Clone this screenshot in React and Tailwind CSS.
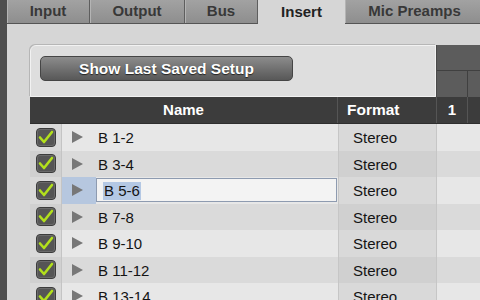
import React from "react";

const rows = ["B 1-2", "B 3-4", "B 5-6", "B 7-8", "B 9-10", "B 11-12", "B 13-14"];

function Check() {
  return (
    <svg width="20" height="19" viewBox="0 0 20 19">
      <rect x="0.5" y="0.5" width="19" height="18" rx="3.5" fill="#555" stroke="#3c3c3c" />
      <rect x="1.5" y="1.5" width="17" height="16" rx="2.5" fill="none" stroke="#6a6a6a" />
      <path d="M4 9.5 L8 14 L16 4" fill="none" stroke="#b2e01c" strokeWidth="2.6" strokeLinecap="round" strokeLinejoin="round" />
    </svg>
  );
}

function Tab({ label, w, active }) {
  return (
    <div
      className={
        "h-full flex items-center justify-center shrink-0 text-[15px] font-bold " +
        (active
          ? "bg-[#d6d6d6] text-[#222]"
          : "bg-gradient-to-b from-[#a2a2a2] to-[#8e8e8e] text-[#383838] border-r border-[#5e5e5e] border-b border-b-[#555] shadow-[inset_1px_0_0_#b4b4b4]")
      }
      style={{ width: w }}
    >
      {label}
    </div>
  );
}

export default function App() {
  return (
    <div
      className="w-[480px] h-[300px] overflow-hidden flex bg-[#d6d6d6]"
      style={{ fontFamily: '"Liberation Sans", Arial, sans-serif' }}
    >
      <div className="w-[7px] shrink-0 bg-[#4e4e4e]" />
      <div className="flex-1 flex flex-col min-w-0">
        {/* tabs */}
        <div className="h-[24px] flex shrink-0">
          <Tab label="Input" w={83} />
          <Tab label="Output" w={95} />
          <Tab label="Bus" w={73} />
          <Tab label="Insert" w={87} active />
          <Tab label="Mic Preamps" w={140} />
        </div>
        {/* content */}
        <div className="flex-1 pt-[21px] pl-[23px] flex flex-col">
          <div className="flex h-[52px] shrink-0">
            <div className="w-[406px] bg-[#dedede] border border-[#f2f2f2] rounded-tl-[6px] shadow-[-1px_-1px_0_#b6b6b6] pl-[9px] pt-[10px]">
              <div className="w-[253px] h-[25px] rounded-[5px] border border-[#454545] bg-gradient-to-b from-[#8c8c8c] to-[#585858] flex items-center justify-center text-white font-bold text-[15.5px] [text-shadow:0_1px_1px_#222]">
                Show Last Saved Setup
              </div>
            </div>
            <div className="flex-1 bg-[#5c5c5c] flex flex-col border-l border-[#4a4a4a]">
              <div className="h-[26px] border-b border-[#404040]" />
              <div className="flex-1 flex">
                <div className="w-[31px] border-r border-[#404040]" />
                <div className="flex-1" />
              </div>
            </div>
          </div>
          {/* table header */}
          <div className="h-[27px] shrink-0 flex bg-[#3c3c3c] text-white font-bold text-[15px] border-b border-[#2e2e2e]">
            <div className="w-[308px] flex items-center justify-center border-r border-[#555]">Name</div>
            <div className="w-[99px] flex items-center pl-[9px] border-r border-[#555] text-[15.5px]">Format</div>
            <div className="w-[31px] flex items-center justify-center border-r border-[#555]">1</div>
            <div className="flex-1" />
          </div>
          {/* rows */}
          {rows.map((r, i) => {
            const odd = i % 2 === 0;
            const sel = i === 2;
            return (
              <div key={r} className="h-[26.5px] shrink-0 flex text-[15px] text-[#141414]">
                <div className={"w-[32px] flex items-center justify-center border-r border-[#c4c4c4] " + (odd ? "bg-[#d9d9d9]" : "bg-[#d0d0d0]")}>
                  <Check />
                </div>
                <div className={"w-[276px] flex items-center " + (odd ? "bg-[#e7e7e7]" : "bg-[#dadada]")}>
                  <div className={"w-[34px] h-full flex items-center pl-[10px] " + (sel ? "bg-[#b6c7df]" : "")}>
                    <svg width="11" height="12" viewBox="0 0 11 12">
                      <path d="M0 0 L11 6 L0 12 Z" fill="#777" />
                    </svg>
                  </div>
                  {sel ? (
                    <div className="w-[241px] h-[24px] bg-[#f3f3f3] border border-[#8e9bb0] flex items-center pl-[6px] pt-[1px]">
                      <span className="bg-[#b4c8e4] px-[1px] leading-[18px]">B 5-6</span>
                    </div>
                  ) : (
                    <span className="pl-[2px] pt-[2px]">{r}</span>
                  )}
                </div>
                <div className={"w-[99px] flex items-center pl-[14px] pt-[2px] border-l border-r border-[#c6c6c6] " + (odd ? "bg-[#d9d9d9]" : "bg-[#d0d0d0]")}>
                  Stereo
                </div>
                <div className={"flex-1 " + (odd ? "bg-[#e7e7e7]" : "bg-[#dadada]")} />
              </div>
            );
          })}
        </div>
      </div>
    </div>
  );
}
